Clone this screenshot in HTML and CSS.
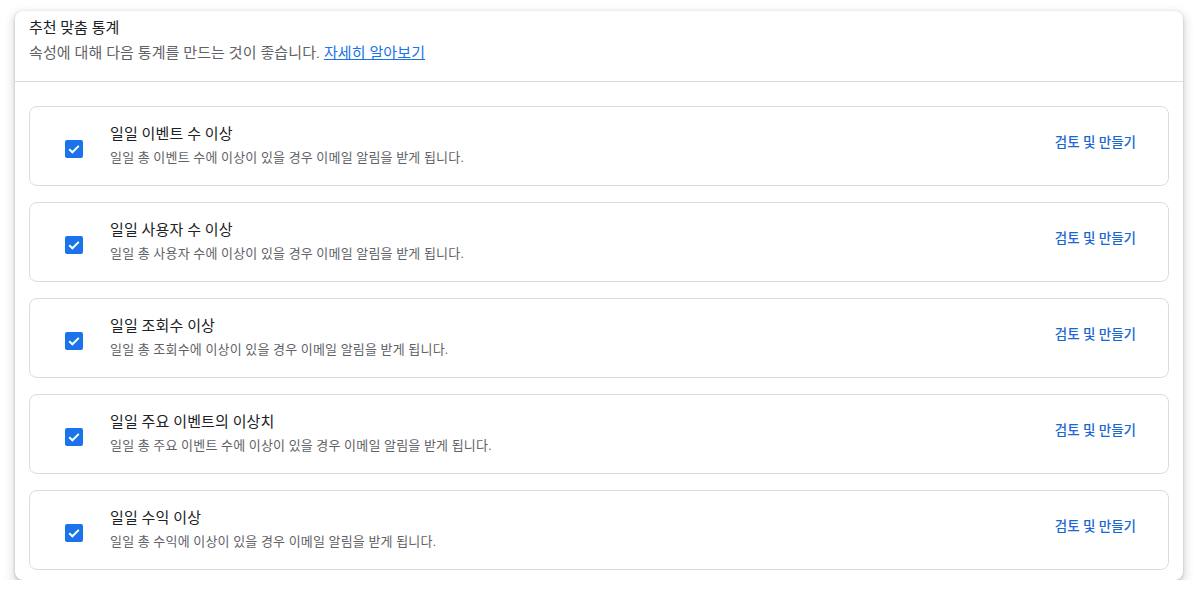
FILE: index.html
```html
<!DOCTYPE html>
<html lang="ko">
<head>
<meta charset="utf-8">
<title>추천 맞춤 통계</title>
<link rel="stylesheet" href="styles.css">
</head>
<body>
<div class="card">
  <div class="card-header">
    <div class="title">추천 맞춤 통계</div>
    <div class="subtitle">속성에 대해 다음 통계를 만드는 것이 좋습니다. <a href="#" class="link">자세히 알아보기</a></div>
  </div>
  <div class="list">
    <div class="item">
      <span class="check"><svg viewBox="0 0 18 18" width="18" height="18"><rect x="0" y="0" width="18" height="18" rx="2" fill="#1a73e8"/><path d="M4.2 9.2 L7.4 12.3 L13.8 5.9" fill="none" stroke="#fff" stroke-width="2"/></svg></span>
      <div class="texts">
        <div class="item-title">일일 이벤트 수 이상</div>
        <div class="item-desc">일일 총 이벤트 수에 이상이 있을 경우 이메일 알림을 받게 됩니다.</div>
      </div>
      <a href="#" class="action">검토 및 만들기</a>
    </div>
    <div class="item">
      <span class="check"><svg viewBox="0 0 18 18" width="18" height="18"><rect x="0" y="0" width="18" height="18" rx="2" fill="#1a73e8"/><path d="M4.2 9.2 L7.4 12.3 L13.8 5.9" fill="none" stroke="#fff" stroke-width="2"/></svg></span>
      <div class="texts">
        <div class="item-title">일일 사용자 수 이상</div>
        <div class="item-desc">일일 총 사용자 수에 이상이 있을 경우 이메일 알림을 받게 됩니다.</div>
      </div>
      <a href="#" class="action">검토 및 만들기</a>
    </div>
    <div class="item">
      <span class="check"><svg viewBox="0 0 18 18" width="18" height="18"><rect x="0" y="0" width="18" height="18" rx="2" fill="#1a73e8"/><path d="M4.2 9.2 L7.4 12.3 L13.8 5.9" fill="none" stroke="#fff" stroke-width="2"/></svg></span>
      <div class="texts">
        <div class="item-title">일일 조회수 이상</div>
        <div class="item-desc">일일 총 조회수에 이상이 있을 경우 이메일 알림을 받게 됩니다.</div>
      </div>
      <a href="#" class="action">검토 및 만들기</a>
    </div>
    <div class="item">
      <span class="check"><svg viewBox="0 0 18 18" width="18" height="18"><rect x="0" y="0" width="18" height="18" rx="2" fill="#1a73e8"/><path d="M4.2 9.2 L7.4 12.3 L13.8 5.9" fill="none" stroke="#fff" stroke-width="2"/></svg></span>
      <div class="texts">
        <div class="item-title">일일 주요 이벤트의 이상치</div>
        <div class="item-desc">일일 총 주요 이벤트 수에 이상이 있을 경우 이메일 알림을 받게 됩니다.</div>
      </div>
      <a href="#" class="action">검토 및 만들기</a>
    </div>
    <div class="item">
      <span class="check"><svg viewBox="0 0 18 18" width="18" height="18"><rect x="0" y="0" width="18" height="18" rx="2" fill="#1a73e8"/><path d="M4.2 9.2 L7.4 12.3 L13.8 5.9" fill="none" stroke="#fff" stroke-width="2"/></svg></span>
      <div class="texts">
        <div class="item-title">일일 수익 이상</div>
        <div class="item-desc">일일 총 수익에 이상이 있을 경우 이메일 알림을 받게 됩니다.</div>
      </div>
      <a href="#" class="action">검토 및 만들기</a>
    </div>
  </div>
</div>
</body>
</html>
```
FILE: styles.css
```css
* { box-sizing: border-box; }
html, body { background: #ffffff; }
body {
  margin: 0;
  padding: 11px 15px 0 15px;
  font-family: Roboto, "Noto Sans CJK KR", sans-serif;
  color: #202124;
}
.card {
  width: 1168px;
  height: 569px;
  background: #fff;
  border-radius: 8px;
  box-shadow: 0 1px 3px rgba(60,64,67,0.3), 0 4px 8px 3px rgba(60,64,67,0.15);
  overflow: hidden;
}
.card-header {
  padding: 6px 14px 0 14px;
  height: 71px;
  border-bottom: 1px solid #dadce0;
}
.title {
  font-size: 15px;
  line-height: 22px;
  font-weight: 400;
  color: #202124;
}
.subtitle {
  font-size: 15px;
  line-height: 24px;
  margin-top: 2px;
  letter-spacing: 0.1px;
  color: #5f6368;
}
.link {
  color: #1a73e8;
  text-decoration: underline;
}
.list {
  padding: 24px 14px 0 14px;
  display: flex;
  flex-direction: column;
  gap: 16px;
}
.item {
  height: 80px;
  border: 1px solid #dadce0;
  border-radius: 8px;
  display: flex;
  align-items: center;
  padding: 0 32px 0 35px;
}
.check {
  width: 18px;
  height: 18px;
  display: block;
  margin-top: 5px;
  flex: none;
}
.check svg { display: block; }
.texts {
  margin-left: 27px;
  flex: 1;
  margin-top: -2px;
}
.item-title {
  font-size: 15px;
  line-height: 22px;
  letter-spacing: 0.1px;
  color: #202124;
}
.item-desc {
  font-size: 13px;
  line-height: 20px;
  margin-top: 3px;
  letter-spacing: 0.2px;
  color: #5f6368;
}
.action {
  font-size: 13.5px;
  font-weight: 500;
  color: #1967d2;
  text-decoration: none;
  margin-top: -10px;
}
```
